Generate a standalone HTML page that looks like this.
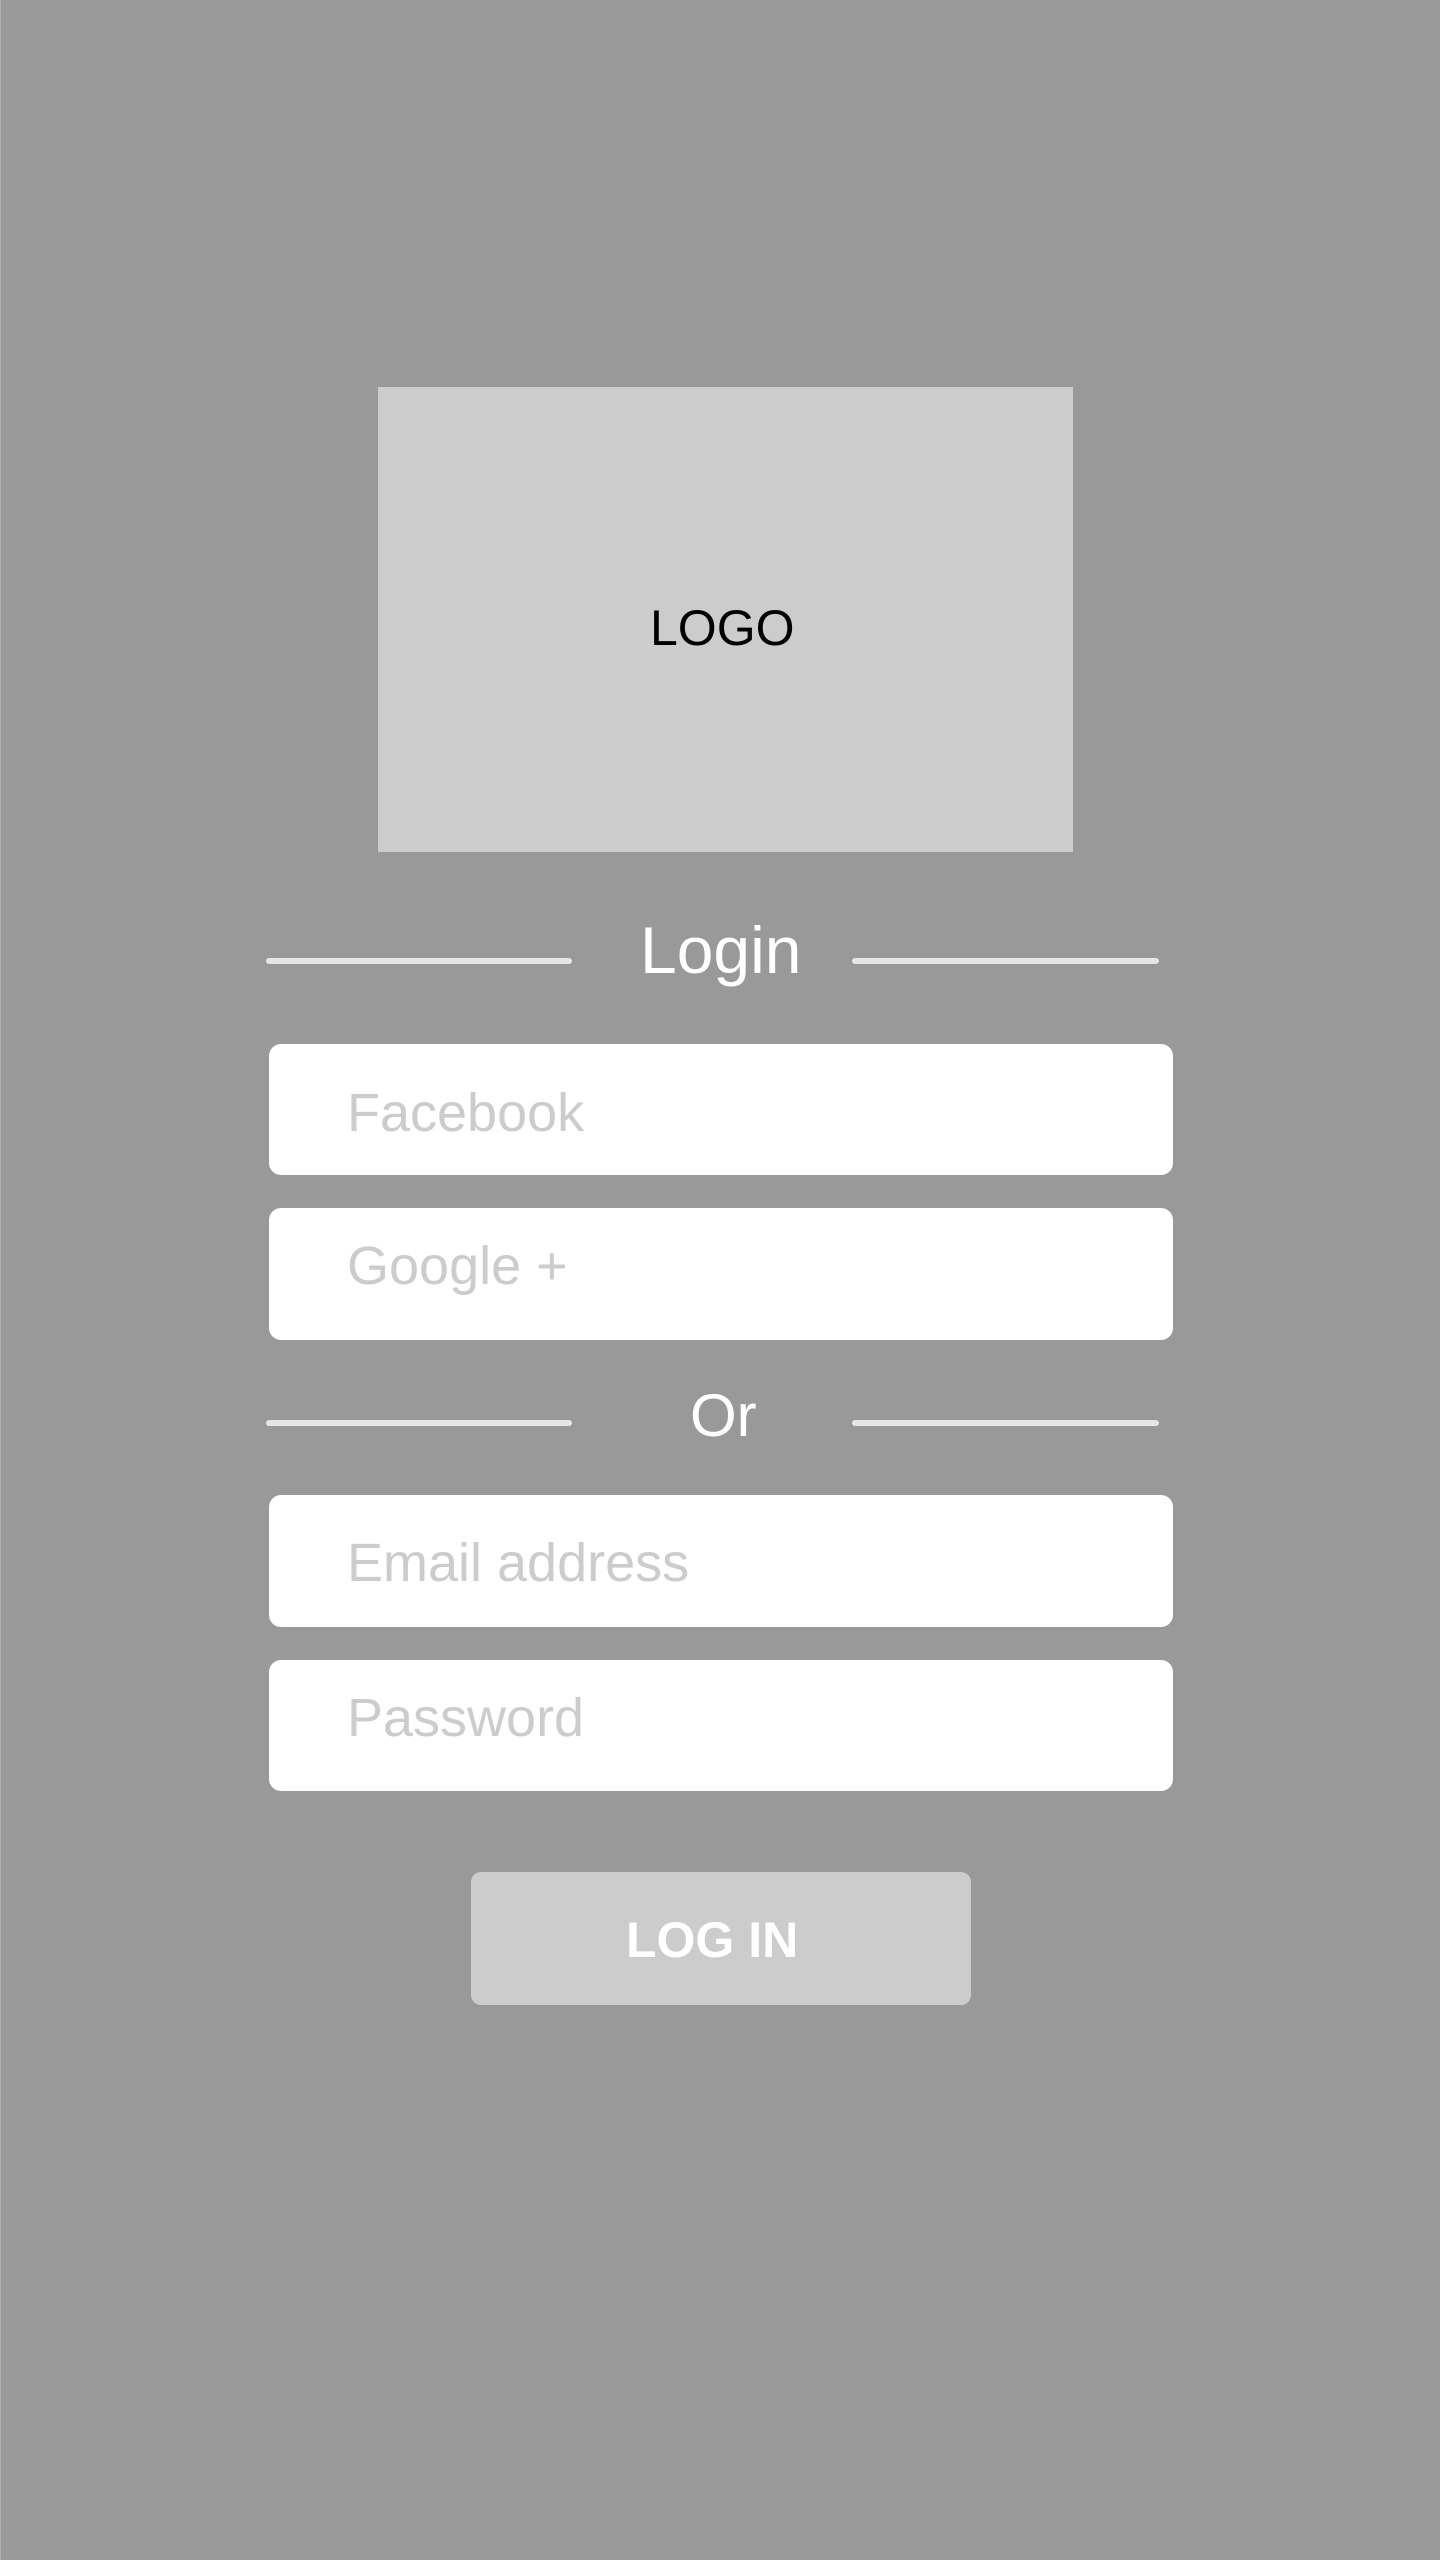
<!DOCTYPE html>
<html><head><meta charset="utf-8"><style>
html,body{margin:0;padding:0}
body{width:1440px;height:2560px;background:#999;position:relative;overflow:hidden;font-family:"Liberation Sans",sans-serif}
.a{position:absolute;white-space:nowrap;line-height:1}
.box{position:absolute;left:269px;width:904px;background:#fff;border-radius:12px}
.line{position:absolute;height:6px;background:#e6e6e6;border-radius:3px}
.ph{color:#ccc;font-size:54px;left:347px}
</style></head><body>
<div style="position:absolute;left:0;top:0;width:1px;height:2560px;background:#b0b0b0"></div>
<div style="position:absolute;left:378px;top:387px;width:695px;height:465px;background:#ccc"></div>
<div class="a" style="left:650px;top:603px;font-size:50px;color:#000">LOGO</div>
<div class="line" style="left:266px;top:958px;width:306px"></div>
<div class="line" style="left:852px;top:958px;width:307px"></div>
<div class="a" style="left:640px;top:917px;font-size:66px;color:#fff;font-weight:300">Login</div>
<div class="box" style="top:1044px;height:131px"></div>
<div class="a ph" style="top:1086px">Facebook</div>
<div class="box" style="top:1208px;height:132px"></div>
<div class="a ph" style="top:1239px">Google +</div>
<div class="line" style="left:266px;top:1420px;width:306px"></div>
<div class="line" style="left:852px;top:1420px;width:307px"></div>
<div class="a" style="left:690px;top:1386px;font-size:60px;color:#fff">Or</div>
<div class="box" style="top:1495px;height:132px"></div>
<div class="a ph" style="top:1536px">Email address</div>
<div class="box" style="top:1660px;height:131px"></div>
<div class="a ph" style="top:1691px">Password</div>
<div style="position:absolute;left:471px;top:1872px;width:500px;height:133px;background:#ccc;border-radius:10px"></div>
<div class="a" style="left:626px;top:1915px;font-size:50px;font-weight:bold;color:#fff">LOG IN</div>
</body></html>
